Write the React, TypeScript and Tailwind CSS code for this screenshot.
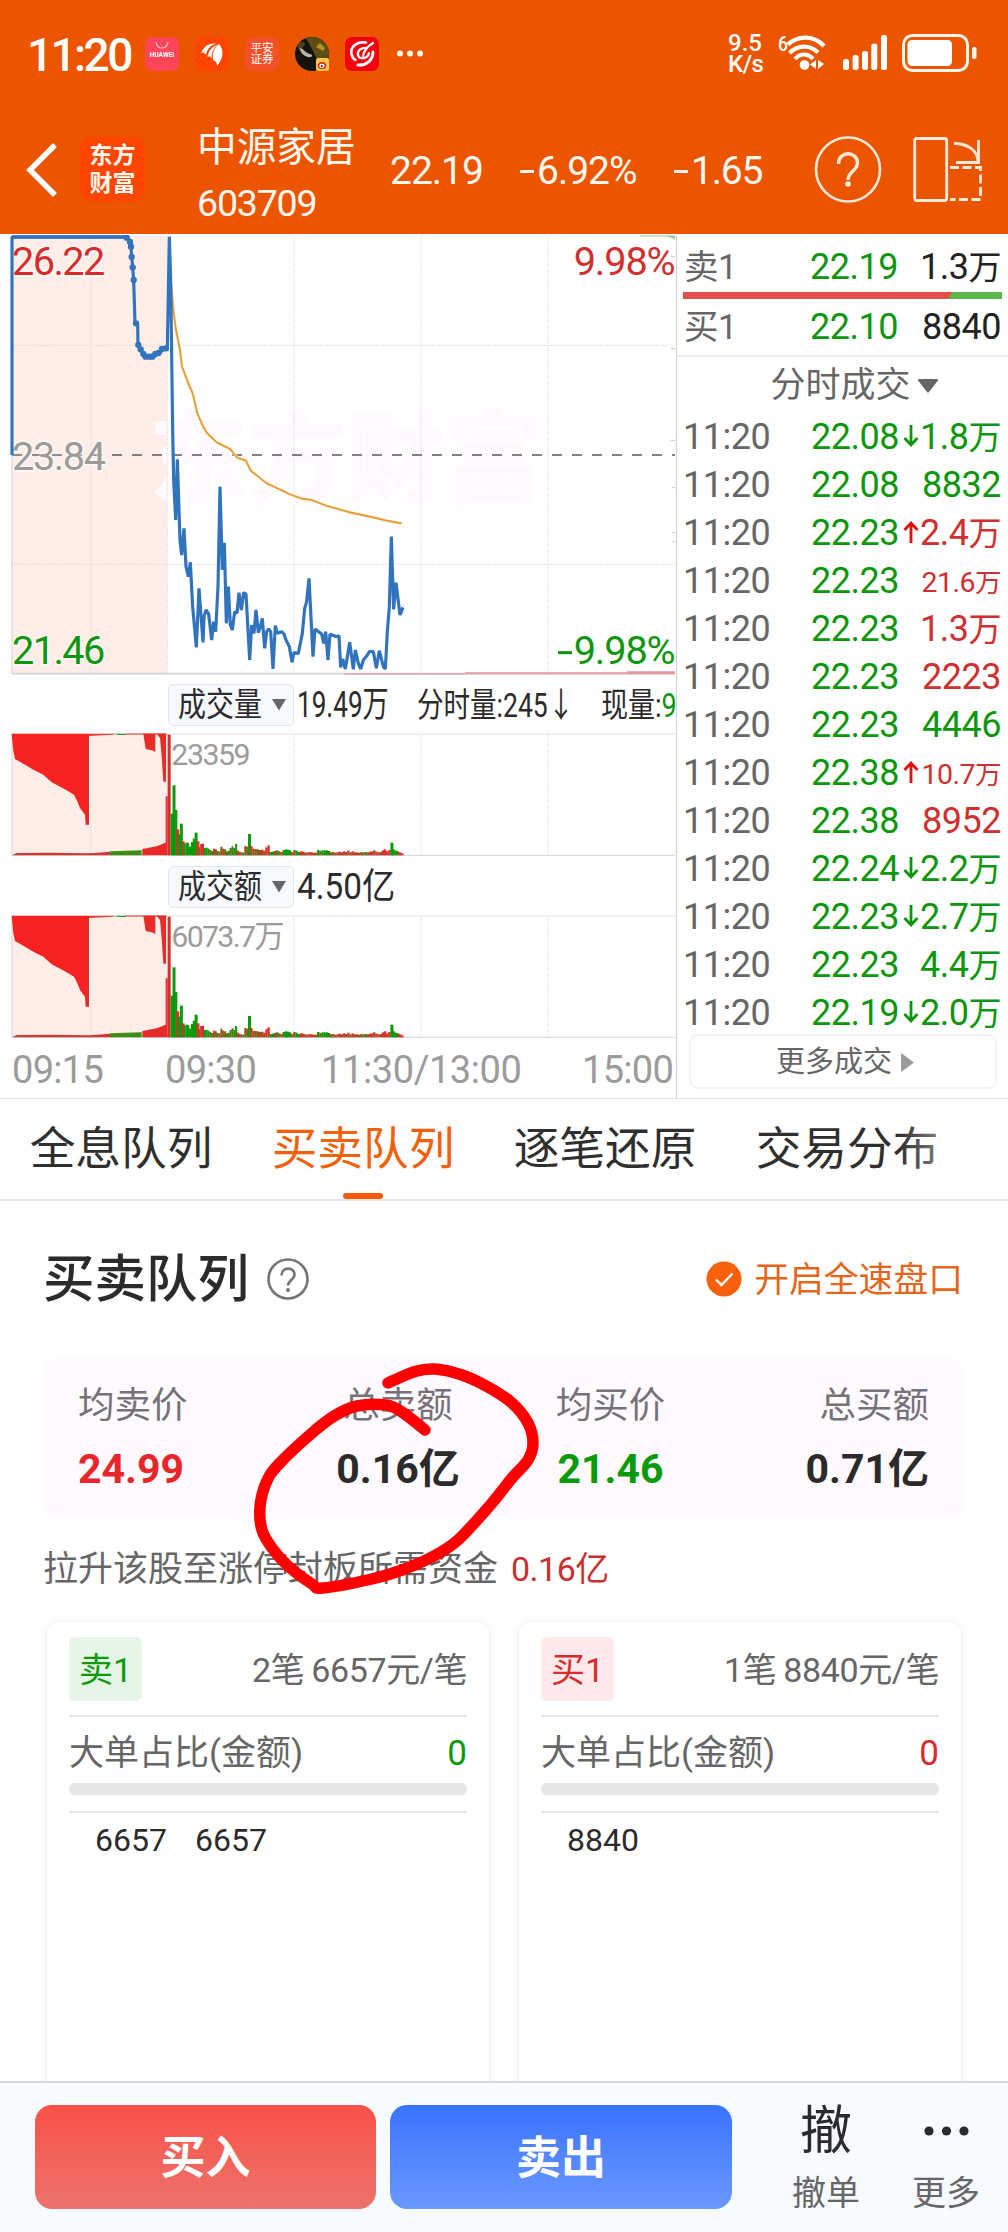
import React from "react";

const FONT = "font-[Roboto,'Noto_Sans_CJK_SC',sans-serif]";

/* ---------- status bar ---------- */

function StatusBar() {
  return (
    <div className="flex h-[108px] items-center pl-[27px] pr-[31px]">
      <div className="mt-[1px] w-[118px] text-[46px] font-medium leading-none tracking-[-2.600px]">11:20</div>
      <div className="flex items-center gap-4">
        <div className="flex size-[34px] flex-col items-center rounded-[8px] bg-[#ff4658]">
          <svg width="14" height="9" viewBox="0 0 14 9" className="mt-[4px]" fill="none" stroke="#ffc9cc" strokeWidth="1.2">
            <path d="M1 1c1 8 11 8 12 0" />
          </svg>
          <span className="mt-[2px] text-[6.6px] font-bold leading-none">HUAWEI</span>
        </div>
        <div className="size-[34px] rounded-[8px] bg-[#ff4500]">
          <svg width="34" height="34" viewBox="0 0 34 34" fill="#fff">
            <path d="M6 16C9 9 14 6 21 6.500 15 9 12 12 11 18c-1-2-3-3-5-2z" />
            <path d="M12.500 20c1-6 4-10 10-12.500-4 4-6 8-6 14-1-2-2-2.500-4-1.500z" />
            <path d="M18 23c-1-7 1-12 6-16 5 6 5 14-2 22 0-3-1-5-4-6z" />
          </svg>
        </div>
        <div className="flex size-[34px] flex-col items-center justify-center rounded-[8px] bg-[#f4502a] text-[11.500px] font-medium leading-[11px] text-[#ffe6dc]">
          <span>平安</span>
          <span>证券</span>
        </div>
        <svg width="34" height="34" viewBox="0 0 34 34">
          <defs>
            <clipPath id="avatar"><circle cx="17" cy="17" r="17" /></clipPath>
          </defs>
          <g clipPath="url(#avatar)">
            <rect width="34" height="34" fill="#15130d" />
            <path d="M10 0h24v22H22L16 10z" fill="#5c4d12" />
            <path d="M21 10l4-4 5 5-2 3z" fill="#b2951c" />
            <path d="M2 8c4-5 8-3 8 0l-6 6z" fill="#4b4620" />
            <path d="M5 11c3 0 4 4 10 6 4 1 2 4-2 3-4-1-8-4-8-9z" fill="#b9b4a8" />
          </g>
          <rect x="21" y="21" width="13" height="13" rx="2.500" fill="#ffc84a" />
          <ellipse cx="27" cy="28.500" rx="4.300" ry="3.600" fill="#e2231a" />
          <ellipse cx="27" cy="28.800" rx="2.700" ry="2.100" fill="#fff" />
          <circle cx="26.800" cy="29" r="1.100" fill="#222" />
        </svg>
        <svg width="34" height="34" viewBox="0 0 34 34">
          <rect width="34" height="34" rx="7" fill="#f5000f" />
          <g fill="none" stroke="#fff" strokeLinecap="round">
            <path d="M21 5.500C12 4 5 10 6.500 17c.5 3 2 5 4 6" strokeWidth="2.600" />
            <path d="M28 15c0 8-7 14-15 13" strokeWidth="3" />
            <path d="M22 11c-6-1-10 3-9 7 1 5 10 4 11-2" strokeWidth="2.200" />
            <path d="M28 6c-5 3-9 8-10 13" strokeWidth="2.200" />
          </g>
        </svg>
        <svg width="28" height="8" viewBox="0 0 28 8" className="ml-[1px]" fill="#fff6ee">
          <circle cx="4" cy="3.500" r="3" /><circle cx="14" cy="3.500" r="3" /><circle cx="24" cy="3.500" r="3" />
        </svg>
      </div>
      <div className="ml-auto flex items-center">
        <div className="mr-[2px] w-[45px] text-[24px] font-medium leading-[21.500px]">
          <div>9.5</div>
          <div className="tracking-[-0.500px]">K/s</div>
        </div>
        <svg width="56" height="52" viewBox="0 -6 56 52" className="mr-[12px]">
          <text x="3" y="17" fontSize="21" fontWeight="500" fill="#fff" textLength="10" lengthAdjust="spacingAndGlyphs">6</text>
          <g fill="none" stroke="#fff" strokeWidth="4.200">
            <path d="M13 10.500C23 1 39 1 49 12" />
            <path d="M14.500 19C23 10.500 35 10.500 43 18.500" />
            <path d="M20 25c5-6 13-6 18 0" />
          </g>
          <circle cx="29.500" cy="31" r="4.800" fill="#fff" />
          <path d="M41 26v9l-6-4.500zM43 26v9l6-5z" fill="#fff" />
        </svg>
        <svg width="46" height="40" viewBox="0 0 46 40" fill="#fff" className="mr-[13px]">
          <rect x="0" y="25" width="6" height="11" rx="2.500" />
          <rect x="9.600" y="21" width="6" height="15" rx="2.500" />
          <rect x="19" y="17" width="6" height="19" rx="2.500" />
          <rect x="28.300" y="9.500" width="6" height="26.500" rx="2.500" />
          <rect x="38" y="1" width="6" height="35" rx="2.500" />
        </svg>
        <svg width="75" height="40" viewBox="0 0 75 40">
          <rect x="1.500" y="1.500" width="64" height="35" rx="9" fill="none" stroke="#fff4ea" strokeWidth="3" />
          <rect x="5.500" y="6" width="44.500" height="26" rx="4.500" fill="#fff" />
          <rect x="70" y="13" width="4.500" height="12" rx="2" fill="#fff4ea" />
        </svg>
      </div>
    </div>
  );
}

/* ---------- title bar ---------- */

function TitleBar() {
  return (
    <div className="flex h-[126px] items-start text-[#fff8f0]">
      <svg width="32" height="56" viewBox="0 0 32 56" className="ml-[25px] mt-[34px]" fill="none" stroke="#fff" strokeWidth="5.500">
        <path d="M30 3L5 28l25 25" />
      </svg>
      <div className="ml-[23px] mt-[29px] flex size-[65px] flex-col items-center justify-center rounded-[12px] bg-[#ff4600] text-[23px] font-bold leading-[28px]">
        <span>东方</span>
        <span>财富</span>
      </div>
      <div className="ml-[52px] mt-[18px] w-[180px]">
        <div className="text-[39.700px] leading-[44px] whitespace-nowrap">中源家居</div>
        <div className="mt-[11px] text-[37.500px] leading-[44px] tracking-[-1.200px]">603709</div>
      </div>
      <div className="mt-[43px] flex text-[39px] leading-[40px]">
        <span className="ml-[13px] w-[130px] tracking-[-1px]">22.19</span>
        <span className="flex w-[154px] items-center whitespace-nowrap"><i className="mr-[3px] h-[3px] w-[14px] bg-[#fff8f0]" /><span className="tracking-[-1px]">6.92%</span></span>
        <span className="flex w-[120px] items-center"><i className="mr-[3px] h-[3px] w-[14px] bg-[#fff8f0]" /><span className="tracking-[-1.200px]">1.65</span></span>
      </div>
      <div className="mr-[24px] ml-auto mt-[28px] flex gap-[31px]">
        <svg width="68" height="68" viewBox="0 0 68 68" fill="none" stroke="#ffe9d8" strokeWidth="2.600">
          <circle cx="34" cy="33.500" r="32" />
          <path d="M24.500 28c0-14 19-13 19-1 0 8-9.500 8-9.500 17" strokeWidth="3.400" />
          <circle cx="34" cy="48" r="2.800" fill="#ffe9d8" stroke="none" />
        </svg>
        <svg width="71" height="68" viewBox="0 0 71 68" fill="none" stroke="#ffe9d8" strokeWidth="2.800">
          <rect x="1.700" y="2.500" width="32" height="62" rx="2" />
          <path d="M41 7.500c14 0 24 7 24 19" />
          <path d="M65.500 4v22.500H43" />
          <path d="M37 31.500h30.500v32H37" strokeDasharray="9 3.500" />
        </svg>
      </div>
    </div>
  );
}

/* ---------- charts ---------- */

const PRICE =
  "36,675 36,21 380,21 390,32 393,50 395,80 398,112 401,150 405,280 413,283 414,345 425,365 435,380 460,380 480,368 490,357 502,355 508,20 512,150 518,600 521,750 527,870 532,688 540,930 545,975 552,895 558,1010 565,1040 571,997 578,1130 589,1252 597,1075 609,1237 612,1160 618,1140 626,1152 635,1230 641,1175 647,1205 654,1070 660,770 667,1020 673,938 679,1180 685,1070 691,1185 697,1200 704,1145 711,1150 717,1088 724,1140 731,1088 738,1092 749,1290 755,1185 762,1210 768,1140 775,1208 781,1190 787,1165 794,1255 800,1205 806,1197 812,1205 819,1317 826,1187 832,1210 845,1205 852,1212 858,1230 868,1250 876,1297 882,1268 895,1270 907,1210 914,1135 920,1115 927,1045 939,1280 945,1197 965,1212 971,1240 977,1205 984,1290 990,1213 1010,1220 1017,1217 1022,1312 1028,1287 1036,1317 1043,1275 1049,1237 1060,1318 1066,1260 1075,1300 1082,1317 1090,1290 1100,1278 1108,1265 1120,1265 1129,1315 1138,1262 1150,1310 1156,1317 1162,1205 1168,1130 1174,920 1181,1138 1188,1058 1200,1155 1209,1132";

const AVERAGE =
  "514,165 520,240 528,300 540,360 546,410 565,460 578,490 592,550 605,580 620,608 650,637 690,657 712,683 738,692 752,722 800,760 870,793 905,806 935,810 975,826 1050,847 1110,860 1160,872 1205,880";

const DOTS = [[380, 23], [390, 36], [393, 50], [395, 80], [398, 112], [401, 150], [408, 280], [415, 345], [422, 358], [430, 372], [437, 380], [447, 380], [457, 380], [466, 372], [476, 369], [486, 357], [498, 355]];

const HALO = { paintOrder: "stroke" as const };

function PriceChart() {
  return (
    <svg width="676" height="440" viewBox="0 15 2028 1320" className="block">
      <rect x="36" y="18" width="465" height="1312" fill="#ffeee7" />
      <text x="447" y="792" fontSize="296" fontWeight="900" fill="#fefaff" textLength="1184">东方财富</text>
      <g stroke="#d9d9d9" strokeWidth="3.500" strokeDasharray="3 4">
        <path d="M273 18V1330M502 18V1330M882 18V1330M1263 18V1330M1644 18V1330" />
        <path d="M36 346H2025M36 1003H2025" />
      </g>
      <path d="M36 20V1332" stroke="#dcd8da" strokeWidth="4" />
      <path d="M36 675H2025" stroke="#808080" strokeWidth="6" strokeDasharray="30 30" />
      <path d="M36 1331H2025" stroke="#d6d3d5" strokeWidth="5" />
      <path d="M1032 1332H1395" stroke="#d3adb3" strokeWidth="4" />
      <path d="M1395 1330H2025M1880 1327H2025" stroke="#e49a9d" strokeWidth="6" />
      <path d="M1920 18H2025" stroke="#bfdcb8" strokeWidth="5" />
      <path d="M1998 18h27v10z" fill="#8bd096" />
      <path d="M2012 79h13M2012 355h13M2012 631h13M2015 773h10M2017 908h8M2017 935h8" stroke="#b3d8b4" strokeWidth="3" />
      <g fontSize="119" strokeWidth="10" stroke="#fff" strokeOpacity=".6" style={HALO}>
        <text x="36" y="135" fill="#d92b2b" textLength="280">26.22</text>
        <text x="36" y="719" fill="#9b9b9b" textLength="282">23.84</text>
        <text x="36" y="1302" fill="#0e960e" textLength="280">21.46</text>
        <text x="1721" y="135" fill="#d22f2f" textLength="306">9.98%</text>
        <text x="1721" y="1302" fill="#0e960e" textLength="306">9.98%</text>
      </g>
      <path d="M1674 1268h42" stroke="#0e960e" strokeWidth="9" />
      <path d="M36 675H316" stroke="#9b9b9b" strokeWidth="4" strokeDasharray="30 30" opacity=".7" />
      <polyline points={AVERAGE} fill="none" stroke="#fbe9c4" strokeWidth="9" />
      <polyline points={AVERAGE} fill="none" stroke="#e29a30" strokeWidth="5" />
      <polyline points={PRICE} fill="none" stroke="#3273bd" strokeWidth="9.500" strokeLinejoin="bevel" />
      <path d="M36 21H385" stroke="#3273bd" strokeWidth="11" />
      {DOTS.map(([x, y]) => (
        <circle key={`${x}-${y}`} cx={x} cy={y} r="9.500" fill="#3273bd" />
      ))}
    </svg>
  );
}

const BARS =
  "125g 210g 136g 78r 62g 95g 42r 35g 38g 36g 26g 40g 50g 68g 42r 25o 34r 35r 22g 23g 20g 16o 13g 20r 18o 13g 12r 26o 20o 18o 12g 14o 22g 27o 22g 34g 14r 10r 9o 8g 28o 26o 64g 28r 20o 19o 18o 16o 17r 14o 24r 30r 10g 11g 13r 15g 12o 10r 16g 18g 17g 15g 10r 16o 14g 10g 12r 11r 9o 8r 10r 9r 8o 8r 16g 13o 15g 15g 15g 13o 9g 10r 8o 9r 11r 9o 12r 10o 14r 9o 12r 9o 9r 8o 10o 9r 10g 9o 11r 12r 15o 11r 9r 10o 15r 18r 12r 16r 38g 18g 14g 12o 9r 6r"
    .split(" ")
    .map((s) => ({ h: parseInt(s, 10), c: s.slice(-1) }));

const SPIKE = 42;
const BAR_COLOR: Record<string, string> = { g: "#0a9a0a", r: "#d9302c", o: "#8a5a18" };

/* Minutes before the mid-morning spike sit slightly closer together than those after it. */
function barX(i: number) {
  const spikeX = 744;
  if (i <= SPIKE) return 512 + (i * (spikeX - 512)) / SPIKE;
  return spikeX + ((i - SPIKE) * (1210 - spikeX)) / (BARS.length - SPIKE);
}

function VolumeChart({ label, width }: { label: string; width: number }) {
  return (
    <svg width="676" height="124" viewBox="0 190 2028 372" className="block">
      <rect x="36" y="193" width="465" height="364" fill="#ffeee7" />
      <g stroke="#d9d9d9" strokeWidth="3.500" strokeDasharray="3 4">
        <path d="M273 195V556M502 195V556M882 195V556M1263 195V556M1644 195V556" />
      </g>
      <path d="M36 193H2025" stroke="#e2e2e2" strokeWidth="3" />
      <path d="M36 557H2025M36 193V557" stroke="#dcdcdc" strokeWidth="4" />
      <path d="M35 192H267V465H257L255 435 240 415 232 395 222 375 200 362 155 338 130 315 100 300 75 285 45 268 40 245Z" fill="#f82222" />
      <path d="M267 192h73v3l-73 4z" fill="#e53d37" />
      <path d="M265 200V465" stroke="#a8433c" strokeWidth="3" />
      <path d="M336 192h42v4h-20z" fill="#1c9a1c" />
      <path d="M430 192L437 238 460 243 466 248V192ZM470 192L480 205 485 260 490 336H498V192Z" fill="#ea2c28" />
      <path d="M378 193H500" stroke="#d9302c" strokeWidth="3" />
      <path d="M36 557L50 550 150 549 270 551 330 546V557Z" fill="#d03a36" />
      <path d="M330 545L425 542V557H330Z" fill="#3d8d12" />
      <path d="M427 557V538L470 530 497 519V380H503V557Z" fill="#e8292a" />
      <path d="M507.500 195V557" stroke="#d82e2c" strokeWidth="9" />
      {BARS.map((b, i) => (
        <rect key={i} x={barX(i)} y={557 - b.h} width={Math.max(barX(i + 1) - barX(i) + 0.6, b.h > 36 ? 9 : 0)} height={b.h} fill={BAR_COLOR[b.c]} />
      ))}
      <text x="514" y="285" fontSize="91" fill="#9b9b9b" textLength={width}>{label}</text>
    </svg>
  );
}

function IndicatorPicker({ name }: { name: string }) {
  return (
    <div className="ml-[168px] flex h-[42px] w-[126px] shrink-0 items-center rounded-[5px] border border-[#e2e5ee] bg-[#f6f9fe] pl-[9px]">
      <span className="w-[93px] origin-left scale-x-[.86] whitespace-nowrap text-[32.500px] leading-none">{name}</span>
      <svg width="14" height="12" viewBox="0 0 14 12" className="ml-[1px]"><path d="M0 0h14L7 11.500z" fill="#666" /></svg>
    </div>
  );
}

function ChartColumn() {
  return (
    <div className="h-full w-[677px] shrink-0 border-r border-[#cfcfcf] text-[#2b2b2b]">
      <PriceChart />
      <div className="flex h-[58px] items-center pt-[2px]">
        <IndicatorPicker name="成交量" />
        <span className="ml-[3px] w-[120px] origin-left scale-x-[.725] whitespace-nowrap text-[36px] leading-none">19.49万</span>
        <span className="w-[184px] origin-left scale-x-[.78] whitespace-nowrap text-[34px] leading-none">分时量:245↓</span>
        <span className="w-[90px] origin-left scale-x-[.795] whitespace-nowrap text-[34px] leading-none">现量:<span className="text-[#0e960e]">9</span></span>
      </div>
      <VolumeChart label="23359" width={238} />
      <div className="flex h-[58px] items-center pt-[2px]">
        <IndicatorPicker name="成交额" />
        <span className="ml-[3px] origin-left scale-x-[.925] whitespace-nowrap text-[36px] leading-none">4.50亿</span>
      </div>
      <VolumeChart label="6073.7万" width={340} />
      <div className="mt-[8px] flex h-[46px] items-center text-[38px] leading-none tracking-[-0.700px] text-[#9b9b9b]">
        <span className="ml-[12px] w-[153px]">09:15</span>
        <span className="w-[156px]">09:30</span>
        <span className="w-[261px] tracking-[-0.400px]">11:30/13:00</span>
        <span className="whitespace-nowrap">15:00</span>
      </div>
    </div>
  );
}

/* ---------- quotes ---------- */

type Trade = { price: string; arrow?: "up" | "down"; vol: string; red?: boolean; small?: boolean };

const TRADES: Trade[] = [
  { price: "22.08", arrow: "down", vol: "1.8万" },
  { price: "22.08", vol: "8832" },
  { price: "22.23", arrow: "up", vol: "2.4万", red: true },
  { price: "22.23", vol: "21.6万", red: true, small: true },
  { price: "22.23", vol: "1.3万", red: true },
  { price: "22.23", vol: "2223", red: true },
  { price: "22.23", vol: "4446" },
  { price: "22.38", arrow: "up", vol: "10.7万", red: true, small: true },
  { price: "22.38", vol: "8952", red: true },
  { price: "22.24", arrow: "down", vol: "2.2万" },
  { price: "22.23", arrow: "down", vol: "2.7万" },
  { price: "22.23", vol: "4.4万" },
  { price: "22.19", arrow: "down", vol: "2.0万" },
];

function Arrow({ dir }: { dir?: "up" | "down" }) {
  if (!dir) return <span className="w-[16px]" />;
  return (
    <svg width="16" height="22" viewBox="0 0 16 22" className="-mt-[3px] shrink-0" fill="none" strokeWidth="2.800" stroke={dir === "up" ? "#dd0f0f" : "#0e960e"}>
      {dir === "up" ? <path d="M8 22V2M1.500 9L8 2l6.500 7" /> : <path d="M8 0v20M1.500 13L8 20l6.500-7" />}
    </svg>
  );
}

/* Volume figure whose 万 unit is set a little smaller than the digits. */
function Volume({ text, small }: { text: string; small?: boolean }) {
  if (!text.endsWith("万")) return <span>{text}</span>;
  return (
    <span className={small ? "text-[28.500px]" : ""}>
      {text.slice(0, -1)}
      <span className={small ? "text-[26.500px]" : "text-[33px]"}>万</span>
    </span>
  );
}

function BookRow({ name, price, vol }: { name: string; price: string; vol: string }) {
  return (
    <div className="flex h-[40px] items-center pl-[7px] text-[36px] leading-none tracking-[-0.500px]">
      <span className="w-[72px] whitespace-nowrap text-[34.500px] text-[#666]">{name}</span>
      <span className="w-[142px] text-right text-[#0e960e]">{price}</span>
      <span className="w-[103px] whitespace-nowrap text-right text-[#222]"><Volume text={vol} /></span>
    </div>
  );
}

function QuoteColumn() {
  return (
    <div className="flex-1">
      <div className="h-[12px]" />
      <BookRow name="卖1" price="22.19" vol="1.3万" />
      <div className="ml-[6px] mt-[5px] flex h-[7px] w-[319px] bg-[#5cb84c]">
        <div className="w-[269px] bg-[#e14e4c] [clip-path:polygon(0_0,100%_0,98.5%_100%,0_100%)]" />
      </div>
      <div className="h-[8px]" />
      <BookRow name="买1" price="22.10" vol="8840" />
      <div className="mt-[8px] h-[2px] bg-[#ebe9eb]" />
      <div className="flex h-[56px] items-center justify-center pl-[23px] pt-[1px] text-[35px] leading-none text-[#666]">
        分时成交
        <svg width="20" height="14" viewBox="0 0 20 14" className="ml-[7px]"><path d="M1 0h18q2 0 .5 2L11 13q-1 1-2 0L.5 2Q-1 0 1 0z" fill="#666" /></svg>
      </div>
      {TRADES.map((t, i) => (
        <div key={i} className="flex h-[48px] items-center pl-[6px] text-[36px] leading-none tracking-[-0.500px]">
          <span className="w-[90px] text-[#666]">11:20</span>
          <span className="w-[126px] text-right text-[#0e960e]">{t.price}</span>
          <span className="flex w-[24px] justify-center"><Arrow dir={t.arrow} /></span>
          <span className={`flex w-[78px] justify-end whitespace-nowrap ${t.red ? "text-[#cf2f2f]" : "text-[#0e960e]"} ${t.small ? "pt-[4px]" : ""}`}>
            <Volume text={t.vol} small={t.small} />
          </span>
        </div>
      ))}
      <div className="-mt-[3px] ml-[12px] flex h-[55px] w-[308px] items-center justify-center rounded-[9px] border-2 border-[#f5f2f4] pl-[4px] pt-[2px] text-[29px] leading-none text-[#666]">
        更多成交
        <svg width="13" height="19" viewBox="0 0 13 19" className="ml-[9px]"><path d="M0 0l13 9.500L0 19z" fill="#9b9b9b" /></svg>
      </div>
    </div>
  );
}

/* ---------- tabs ---------- */

const TABS = ["全息队列", "买卖队列", "逐笔还原", "交易分布"];

function Tabs() {
  return (
    <div className="relative flex h-[103px] gap-[58px] border-b-2 border-[#e6e6e6] border-t border-t-[#e2e2e2] pl-[29px] text-[45.700px] text-[#2f2f2f]">
      {TABS.map((t, i) => (
        <div key={t} className={`flex w-[184px] shrink-0 flex-col items-center whitespace-nowrap ${i === 1 ? "text-[#f1600a]" : ""}`}>
          <span className="mt-[26px] leading-[50px]">{t}</span>
          {i === 1 && <span className="mt-auto h-[6px] w-[40px] rounded-[3px] bg-[#f55a08]" />}
        </div>
      ))}
      <div className="absolute right-0 top-0 h-[99px] w-[110px] bg-gradient-to-r from-transparent to-white" />
    </div>
  );
}

/* ---------- queue section ---------- */

const STATS = [
  { label: "均卖价", value: "24.99", box: "w-[109px] items-start", color: "text-[#e8262a]" },
  { label: "总卖额", value: "0.16亿", box: "w-[122px] items-center", color: "text-[#2b2b2b]" },
  { label: "均买价", value: "21.46", box: "w-[109px] items-center", color: "text-[#0a9a0a]" },
  { label: "总买额", value: "0.71亿", box: "w-[122px] items-end", color: "text-[#2b2b2b]" },
];

function Stats() {
  return (
    <div className="ml-[43px] flex h-[160px] w-[921px] rounded-[16px] bg-[#fefaff] pt-[28px]">
      <div className="ml-[35px] flex w-[851px]">
        {STATS.map((s, i) => (
          <div key={s.label} className={`flex shrink-0 flex-col whitespace-nowrap ${s.box} ${["", "ml-[150px]", "ml-[97px]", "ml-[142px]"][i]}`}>
            <span className="text-[36.500px] leading-[42px] text-[#757277]">{s.label}</span>
            <span className={`mt-[20px] text-[41px] font-bold leading-[44px] ${s.color}`}>{s.value}</span>
          </div>
        ))}
      </div>
    </div>
  );
}

const LOOP: [number, number][] = [
  [388, 1383], [415, 1371.5], [435, 1369], [462, 1375], [488, 1387], [512, 1403], [528, 1423], [533, 1443], [528, 1460],
  [512, 1478], [492, 1503], [458, 1540], [432, 1557], [402, 1570], [372, 1579], [323, 1588], [312, 1584], [288, 1566],
  [272, 1548], [262, 1530], [260, 1507], [266, 1483], [278, 1465], [312, 1433], [335, 1415.5], [357, 1406], [385, 1405],
  [402, 1412], [425, 1430],
];

/* Catmull-Rom spline through the pen stroke's points. */
function smooth(p: [number, number][]) {
  let d = `M${p[0][0]} ${p[0][1]}`;
  for (let i = 0; i < p.length - 1; i++) {
    const a = p[Math.max(i - 1, 0)];
    const b = p[i];
    const c = p[i + 1];
    const e = p[Math.min(i + 2, p.length - 1)];
    d += `C${b[0] + (c[0] - a[0]) / 6} ${b[1] + (c[1] - a[1]) / 6} ${c[0] - (e[0] - b[0]) / 6} ${c[1] - (e[1] - b[1]) / 6} ${c[0]} ${c[1]}`;
  }
  return d;
}

function Annotation() {
  return (
    <svg width="310" height="250" viewBox="245 1350 310 250" className="pointer-events-none absolute left-[245px] top-[149px]" fill="none" stroke="#ff0000" strokeWidth="11.500" strokeLinecap="round" strokeLinejoin="round">
      <path d={smooth(LOOP)} />
    </svg>
  );
}

type Card = { name: string; summary: [string, string]; badge: string; zero: string; orders: string[] };

const CARDS: Card[] = [
  { name: "卖1", summary: ["2笔", "6657元/笔"], badge: "bg-[#e5f6e6] text-[#0a9a0a]", zero: "text-[#0a9a0a]", orders: ["6657", "6657"] },
  { name: "买1", summary: ["1笔", "8840元/笔"], badge: "bg-[#ffe9eb] text-[#d92b2b]", zero: "text-[#d92b2b]", orders: ["8840"] },
];

function QueueCard({ card }: { card: Card }) {
  return (
    <div className="h-[480px] w-[446px] rounded-[14px] border-2 border-[#f8f7f8] px-[22px] text-[#666] shadow-[0_0_6px_#fbf4fb]">
      <div className="mt-[15px] flex h-[64px] items-center justify-between">
        <span className={`flex h-[64px] w-[73px] items-center justify-center rounded-[6px] pt-[2px] text-[34px] leading-none ${card.badge}`}>{card.name}</span>
        <span className="flex gap-[7px] whitespace-nowrap pt-[1px] text-[34px] leading-none tracking-[-0.400px]"><span>{card.summary[0]}</span><span>{card.summary[1]}</span></span>
      </div>
      <div className="mt-[14px] h-[2px] bg-[#e8e8e8]" />
      <div className="mt-[15px] flex h-[42px] items-center justify-between text-[35px] leading-none">
        <span>大单占比(金额)</span>
        <span className={card.zero}>0</span>
      </div>
      <div className="mt-[9px] h-[12px] rounded-full bg-[#e6e6e6]" />
      <div className="mt-[16px] h-[2px] bg-[#e8e8e8]" />
      <div className="mt-[10px] flex gap-[28px] pl-[26px] text-[32px] leading-[34px] text-[#2b2b2b]">
        {card.orders.map((o, i) => (
          <span key={i}>{o}</span>
        ))}
      </div>
    </div>
  );
}

function QueueSection() {
  return (
    <div className="relative h-[880px] overflow-hidden">
      <div className="ml-[43px] mr-[45px] mt-[50px] flex h-[56px] items-center">
        <span className="text-[51.500px] font-medium leading-none text-[#2b2b2b] mt-[1px]">买卖队列</span>
        <svg width="44" height="44" viewBox="0 0 44 44" className="ml-[17px]" fill="none" stroke="#757575" strokeWidth="2.600">
          <circle cx="22" cy="22" r="19.500" />
          <path d="M15.500 18.500c0-9 13-9 13-1 0 5-6.500 6-6.500 11" />
          <circle cx="22" cy="33" r="2" fill="#757575" stroke="none" />
        </svg>
        <svg width="36" height="36" viewBox="0 0 36 36" className="ml-auto">
          <circle cx="18" cy="18" r="17.500" fill="#f9600a" />
          <path d="M10 18.500l5.500 5.500 11-11.500" fill="none" stroke="#fff" strokeWidth="2.400" />
        </svg>
        <span className="ml-[12px] mt-[3px] text-[34.800px] leading-none text-[#e5651b]">开启全速盘口</span>
      </div>
      <div className="mt-[50px]"><Stats /></div>
      <div className="ml-[43px] mt-[32px] flex h-[40px] items-center gap-[13px] whitespace-nowrap text-[35px] leading-none text-[#666]">
        <span>拉升该股至涨停封板所需资金</span>
        <span className="text-[34px] tracking-[-0.500px] text-[#c93030]">0.16亿</span>
      </div>
      <div className="ml-[45px] mt-[31px] flex gap-[26px]">
        {CARDS.map((c) => (
          <QueueCard key={c.name} card={c} />
        ))}
      </div>
      <Annotation />
    </div>
  );
}

/* ---------- bottom bar ---------- */

function BottomBar() {
  const button = "flex h-[104px] items-center justify-center rounded-[17px] bg-gradient-to-b pt-[4px] text-[45px] font-bold text-white";
  return (
    <div className="flex h-[151px] border-t-2 border-[#cfd8de] bg-[#f7faff] pl-[35px] pt-[22px]">
      <div className={`${button} w-[341px] from-[#f95147] to-[#ec726c]`}>买入</div>
      <div className={`${button} ml-[14px] w-[342px] from-[#3973ff] to-[#6b98ff]`}>卖出</div>
      <div className="ml-[54px] flex w-[80px] flex-col items-center text-[#2b2b2b]">
        <span className="pt-[2px] text-[52px] leading-[50px]">撤</span>
        <span className="mt-[16px] text-[34px] leading-[40px] text-[#666]">撤单</span>
      </div>
      <div className="ml-[40px] flex w-[80px] flex-col items-center">
        <svg width="46" height="50" viewBox="0 0 46 50" fill="#2b2b2b">
          <circle cx="6" cy="26" r="4.600" /><circle cx="23.500" cy="26" r="4.600" /><circle cx="41" cy="26" r="4.600" />
        </svg>
        <span className="mt-[18px] whitespace-nowrap text-[34px] leading-[40px] text-[#666]">更多</span>
      </div>
    </div>
  );
}

export default function App() {
  return (
    <div className={`h-[2232px] w-[1008px] overflow-hidden bg-white ${FONT}`} lang="zh-CN">
      <header className="h-[234px] bg-[#ec5500] text-white">
        <StatusBar />
        <TitleBar />
      </header>
      <div className="mt-px flex h-[863px]">
        <ChartColumn />
        <QuoteColumn />
      </div>
      <Tabs />
      <QueueSection />
      <BottomBar />
    </div>
  );
}
